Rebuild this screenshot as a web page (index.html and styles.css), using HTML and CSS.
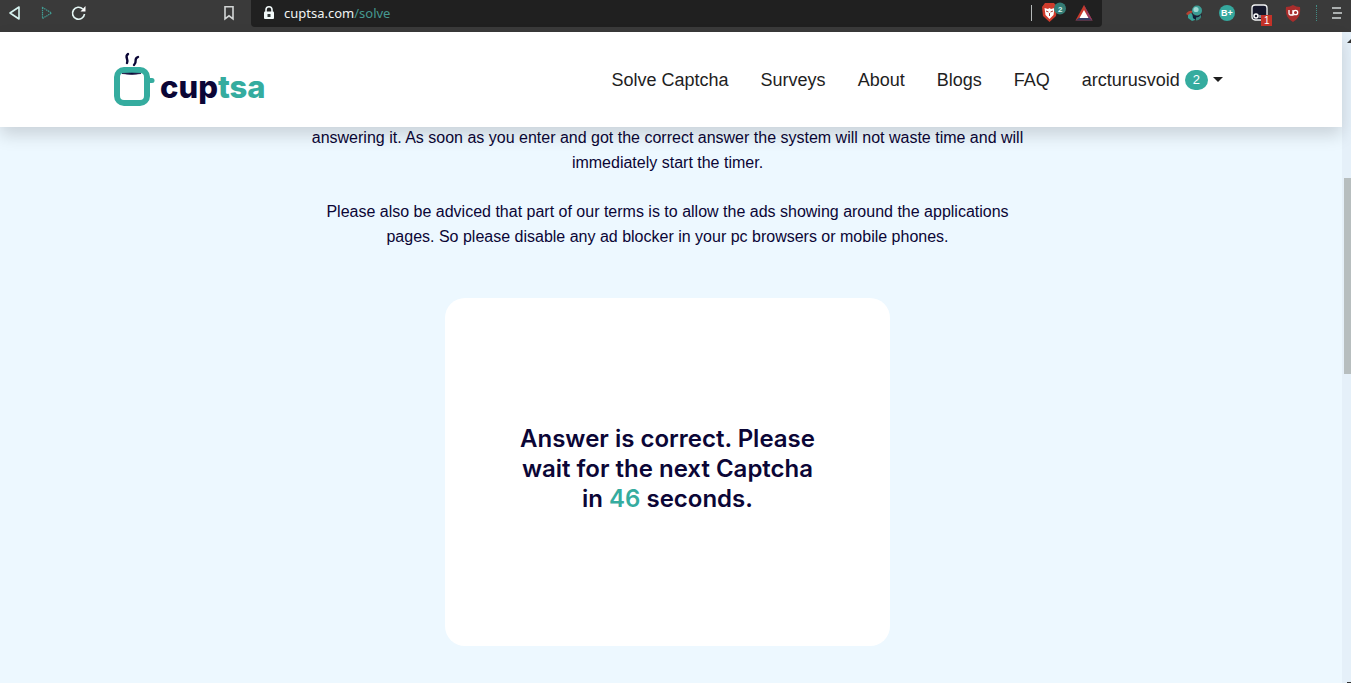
FILE: index.html
```html
<!DOCTYPE html>
<html lang="en">
<head>
<meta charset="utf-8">
<meta name="viewport" content="width=device-width, initial-scale=1">
<title>Cuptsa</title>
<link rel="stylesheet" href="styles.css">
</head>
<body class="window">
<div class="toolbar">
  <div class="toolbar-nav">
    <button class="tool" aria-label="Back"><svg width="16" height="16" viewBox="0 0 16 16"><path d="M13 2v12L4 8z" fill="none" stroke="#d8f5f2" stroke-width="1.600" stroke-linejoin="round"/></svg></button>
    <button class="tool" aria-label="Forward"><svg width="16" height="16" viewBox="0 0 16 16"><path d="M4.500 2.500v11L13.500 8z" fill="none" stroke="#429d94" stroke-width="1.200" stroke-dasharray="1.500 .7"/></svg></button>
    <button class="tool" aria-label="Reload"><svg width="16" height="16" viewBox="0 0 16 16"><path d="M12.800 4A6 6 0 1 0 14.500 9" fill="none" stroke="#e6f7f5" stroke-width="1.700"/><path d="M15.500 1v5.500H10.500z" fill="#fff"/></svg></button>
  </div>
  <button class="tool" aria-label="Bookmark"><svg width="16" height="16" viewBox="0 0 16 16"><path d="M4 1.800h8v12L8 10.800l-4 3z" fill="none" stroke="#d2d5d5" stroke-width="1.600"/></svg></button>
  <div class="address">
    <svg width="14" height="16" viewBox="0 0 14 16"><path d="M4 7V4.800a3 3 0 0 1 6 0V7" fill="none" stroke="#f1f8f8" stroke-width="1.600"/><rect x="2" y="6.500" width="10" height="7.500" rx="1" fill="#f1f8f8"/><rect x="5.500" y="9" width="3" height="3" fill="#303635"/></svg>
    <button class="url">cuptsa.com<span class="path">/solve</span></button>
    <span class="divider"></span>
    <button class="tool shields" aria-label="Shields"><svg width="26" height="22" viewBox="0 0 26 22"><path d="M2 5l3-4h9l3 4-1 9-6.500 6L3 14z" fill="#cf3c2c"/><path d="M4.500 6l3.500 1 1.500-1L11 7l3.500-1-1 7-4 4-4-4z" fill="#fff"/><path d="M6 9l2.500 1M13 9l-2.500 1M9.500 11v3" stroke="#b23b30" fill="none"/><circle cx="20" cy="6.500" r="6" fill="#347c75"/><text x="18" y="10" class="badge-text">2</text></svg></button>
    <button class="tool" aria-label="Rewards"><svg width="20" height="18" viewBox="0 0 20 18"><path d="M10 1L1.500 16.500h17z" fill="#c93a2b"/><path d="M10 1l8.500 15.500L14 13z" fill="#903c67"/><path d="M1.500 16.500L6 13h8l4.500 3.500z" fill="#343d67"/><path d="M10 6l-4.500 8h9z" fill="#fff"/></svg></button>
  </div>
  <div class="extensions">
    <button class="tool" aria-label="Globe extension"><svg width="20" height="20" viewBox="0 0 20 20"><path d="M2 11C4 7 7 7.500 9 8l-4 5z" fill="#b44131"/><path d="M4 12l3-2 3 3 1 4-3 1-4-3z" fill="#39a197"/><circle cx="13" cy="7.500" r="5" fill="#3b9d95"/><circle cx="12" cy="6.500" r="2.600" fill="#9fd7d2"/><path d="M8 9c1 5 6 5 10 2-1 5-6 7-9 4z" fill="#101d38"/><path d="M12 14.500c2 0 4-1 5-3v3c-1 2-3 3-5 3z" fill="#39867e"/></svg></button>
    <button class="tool" aria-label="B+ extension"><svg width="20" height="20" viewBox="0 0 20 20"><circle cx="11" cy="10" r="8" fill="#35a79d"/><text x="5" y="13" class="ext-text">B+</text></svg></button>
    <button class="tool" aria-label="Tab extension, 1"><svg width="24" height="26" viewBox="0 0 24 26"><rect x="4" y="5" width="15" height="15" rx="3" fill="#15172a" stroke="#f2f4f4" stroke-width="1.300"/><circle cx="8" cy="16" r="2" fill="none" stroke="#fff" stroke-width="1.500"/><path d="M12 15v3" stroke="#fff"/><rect x="13" y="15" width="11" height="11" fill="#c43228"/><text x="16" y="24" class="count-text">1</text></svg></button>
    <button class="tool" aria-label="uBlock"><svg width="20" height="20" viewBox="0 0 20 20"><path d="M9 2q3 2 7 2c1 8-2 12-7 15C4 16 1 12 2 4q4 0 7-2z" fill="#a92d2c"/><path d="M5 7v3.500q0 1.500 1.500 1.500H9V7" fill="none" stroke="#fff" stroke-width="1.300"/><circle cx="11.500" cy="9.500" r="2.200" fill="none" stroke="#fff" stroke-width="1.300"/></svg></button>
    <span class="dots"></span>
    <button class="tool" aria-label="Menu"><svg width="16" height="16" viewBox="0 0 16 16"><path d="M3 3h9M4 8h9M3 13h9" stroke="#d1d6d6" stroke-width="1.700"/></svg></button>
  </div>
</div>
<div class="viewport">
  <div class="page">
    <header class="site-header">
      <a class="logo" href="#" aria-label="cuptsa">
        <svg width="42" height="56" viewBox="0 0 42 56"><path d="M14 2c-4 3 1 5-1 9M24 5c-5 2 0 4-4 8" fill="none" stroke="#0b0636" stroke-width="2.400" stroke-linecap="round"/><rect x="3" y="18" width="30" height="33" rx="7" fill="#fff" stroke="#35ac9f" stroke-width="6" /><path d="M35 28.500h3" stroke="#35ac9f" stroke-width="5" stroke-linecap="round"/><path d="M8 21.500q10-1 19 0-9 2-19 0z" fill="#0b0636" stroke="#0b0636" stroke-width=".6"/></svg>
        <span class="wordmark">cup<span class="accent">tsa</span></span>
      </a>
      <nav class="menu">
        <a href="#">Solve Captcha</a>
        <a href="#">Surveys</a>
        <a href="#">About</a>
        <a href="#">Blogs</a>
        <a href="#">FAQ</a>
        <button class="account">arcturusvoid <span class="badge">2</span><span class="caret"></span></button>
      </nav>
    </header>
    <main class="content">
      <p>answering it. As soon as you enter and got the correct answer the system will not waste time and will immediately start the timer.</p>
      <p>Please also be adviced that part of our terms is to allow the ads showing around the applications pages. So please disable any ad blocker in your pc browsers or mobile phones.</p>
      <section class="card">
        <h1>Answer is correct. Please wait for the next Captcha in <span class="accent">46</span> seconds.</h1>
      </section>
    </main>
  </div>
  <div class="scrollbar"><span class="arrow-up"></span><span class="thumb"></span><span class="arrow-down"></span></div>
</div>
</body>
</html>
```
FILE: styles.css
```css
* { box-sizing: border-box; }
.window {
  margin: 0;
  height: 100vh;
  overflow: hidden;
  display: flex;
  flex-direction: column;
  background: #edf8ff;
  color: #0b0636;
  font-family: "Liberation Sans", Arial, sans-serif;
}
button { border: 0; padding: 0; background: none; color: inherit; font: inherit; cursor: pointer; }
a { color: inherit; text-decoration: none; }
svg { display: block; flex: none; }

.toolbar {
  flex: none;
  height: 32px;
  padding: 0 6px 6px;
  display: flex;
  align-items: center;
  background: #3a3a3a;
}
.toolbar-nav { display: flex; gap: 16px; flex: 0 0 215px; }
.address {
  flex: 1;
  height: 27px;
  margin-left: 14px;
  padding: 0 8px 0 11px;
  display: flex;
  align-items: center;
  gap: 8px;
  background: #202020;
  border-radius: 0 0 4px 4px;
}
.url {
  flex: 1;
  text-align: left;
  color: #f0f3f3;
  font-family: "Noto Sans", sans-serif;
  font-size: 13px;
}
.path { color: #459990; }
.divider { width: 1px; height: 16px; background: #b5b9b9; }
.extensions { flex: 0 0 243px; display: flex; align-items: center; justify-content: flex-end; gap: 12px; }
.dots { height: 16px; border-left: 1px dotted #438b84; }
.badge-text { font: bold 8px "Liberation Sans", sans-serif; fill: #d5f3ef; }
.ext-text { font: bold 9px "Liberation Sans", sans-serif; fill: #fff; }
.count-text { font: 10px "Liberation Sans", sans-serif; fill: #fff; }

.viewport { flex: 1; min-height: 0; display: flex; }
.page { flex: 1; min-width: 0; }
.site-header {
  position: relative;
  z-index: 1;
  height: 95px;
  padding: 0 119px 0 114px;
  display: flex;
  align-items: center;
  justify-content: space-between;
  background: #fff;
  box-shadow: 0 8px 16px rgba(0, 0, 0, 0.15);
}
.logo { display: flex; align-items: center; gap: 4px; }
.wordmark { padding-top: 14px; font-family: Inter, sans-serif; font-size: 31px; line-height: 36px; font-weight: 800; }
.accent { color: #35ac9f; }
.menu { display: flex; align-items: center; gap: 32px; color: #1e1e1e; font-size: 18px; line-height: 24px; }
.account { display: flex; align-items: center; gap: 5px; }
.badge {
  padding: 0 8px;
  border-radius: 10px;
  background: #35ac9f;
  color: #fff;
  font-size: 13px;
  line-height: 20px;
}
.caret { border: 5px solid transparent; border-top-color: #1e1e1e; border-bottom: 0; }

.content {
  margin-top: -2px;
  padding: 0 16px 0 9px;
  display: flex;
  flex-direction: column;
  align-items: center;
}
.content p { max-width: 730px; margin: 0 0 24px; font-size: 16px; line-height: 25px; text-align: center; }
.card {
  width: 100%;
  max-width: 445px;
  min-height: 348px;
  margin-top: 25px;
  padding: 0 64px 6px;
  display: flex;
  align-items: center;
  justify-content: center;
  background: #fff;
  border-radius: 20px;
}
.card h1 { margin: 0; font-family: Inter, sans-serif; font-size: 24px; line-height: 30px; font-weight: 600; text-align: center; }

.scrollbar {
  flex: none;
  width: 9px;
  padding: 7px 0 0;
  display: flex;
  flex-direction: column;
  align-items: flex-end;
  background: #e5f0f9;
}
.arrow-up { border: 4px solid transparent; border-right: 0; border-bottom-color: #333; border-top: 0; }
.thumb { width: 7px; height: 196px; margin-top: 135px; background: #b7bebf; }
.arrow-down { width: 4px; height: 1px; margin-top: auto; background: #333; }
```
